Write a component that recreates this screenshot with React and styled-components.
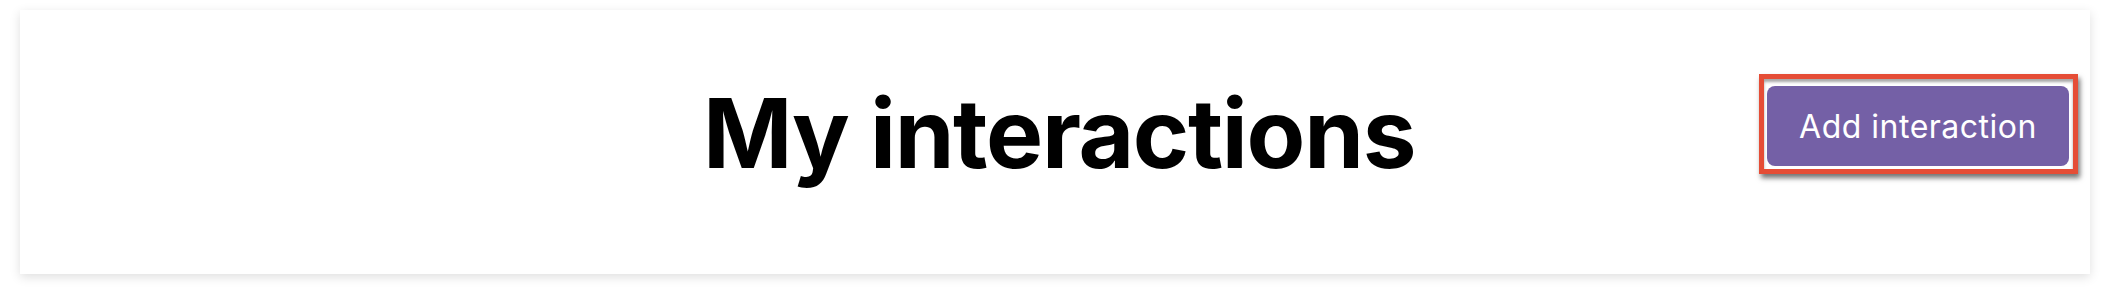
import styled, { createGlobalStyle } from 'styled-components';

const GlobalStyle = createGlobalStyle`
  body {
    margin: 0;
    background: #ffffff;
    font-family: Inter, "Noto Sans", sans-serif;
  }
`;

const Page = styled.div`
  padding: 10px 20px 20px 20px;
`;

// title sits in the middle column, button pinned to the right column
const Card = styled.div`
  height: 264px;
  background: #ffffff;
  display: grid;
  grid-template-columns: 1fr auto 1fr;
  align-items: center;
  box-shadow: 0 3px 10px rgba(0, 0, 0, 0.13);
  padding: 0 12px 36px 20px;
  box-sizing: border-box;
`;

const Title = styled.h1`
  grid-column: 2;
  margin: 0;
  padding-top: 18px;
  text-align: center;
  font-family: Inter, sans-serif;
  font-weight: 700;
  font-size: 96px;
  line-height: 1;
  letter-spacing: -1.3px;
  color: #000000;
  white-space: nowrap;
`;

// red annotation frame around the button
const Highlight = styled.div`
  grid-column: 3;
  justify-self: end;
  display: flex;
  border: 5px solid #e54d36;
  padding: 7px 4px 3px 3px;
  background: #ffffff;
  box-shadow: 2px 4px 5px rgba(0, 0, 0, 0.55), inset 0 3px 3px rgba(0, 0, 0, 0.35);
`;

const Button = styled.button`
  width: 302px;
  height: 80px;
  border: none;
  border-radius: 8px;
  background: #7460a6;
  color: #ffffff;
  font-family: Inter, sans-serif;
  font-size: 32px;
  font-weight: 400;
  letter-spacing: 0.5px;
  padding: 0;
  cursor: pointer;
`;

export default function App() {
  return (
    <Page>
      <GlobalStyle />
      <Card>
        <Title>My interactions</Title>
        <Highlight>
          <Button>Add interaction</Button>
        </Highlight>
      </Card>
    </Page>
  );
}
